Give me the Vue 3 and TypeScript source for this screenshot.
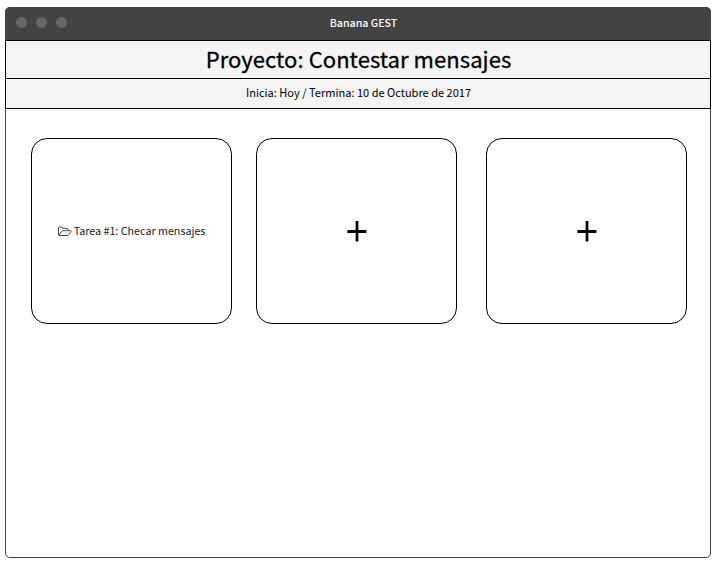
<script setup lang="ts">
interface Card {
  id: number
  label?: string
}

const cards: Card[] = [{ id: 1, label: 'Tarea #1: Checar mensajes' }, { id: 2 }, { id: 3 }]
</script>

<template>
  <main class="window">
    <header class="titlebar">
      <div class="controls">
        <span v-for="n in 3" :key="n" class="dot"></span>
      </div>
      <span class="app-name">Banana GEST</span>
    </header>
    <section class="project">
      <h1 class="title">Proyecto: Contestar mensajes</h1>
      <p class="dates">Inicia: Hoy / Termina: 10 de Octubre de 2017</p>
    </section>
    <section class="cards">
      <article v-for="card in cards" :key="card.id" class="card">
        <template v-if="card.label">
          <svg class="folder" width="14" height="11" viewBox="0 0 14 11">
            <path d="M2.6 9.5H1.5Q.5 9.5.5 8.5V2Q.5 1 1.5 1H3.7Q4.7 1 4.7 2V2.4H9.2Q10.2 2.4 10.2 3.4V4.7M1 9L3.5 5.6Q4.1 4.7 5 4.7H12.6Q13.6 4.7 13 5.5L10.7 8.7Q10.1 9.5 9.2 9.5H1.5" />
          </svg>
          <span class="label">{{ card.label }}</span>
        </template>
        <svg v-else class="plus" width="21" height="22" viewBox="0 0 21 22">
          <path d="M1.4 11.5H20.4" />
          <path class="stem" d="M11 1V21.5" />
        </svg>
      </article>
    </section>
  </main>
</template>

<style>
body {
  background: #fff;
}
</style>

<style scoped>
.window {
  box-sizing: border-box;
  width: 706px;
  height: 551px;
  margin: 7px 0 0 5px;
  border: 1px solid #434343;
  border-radius: 5px;
  background: #fff;
  color: #000;
  font-family: "Noto Sans CJK SC", "Noto Sans", sans-serif;
}
.titlebar {
  display: grid;
  grid-template-columns: 1fr auto 1fr;
  align-items: center;
  height: 33px;
  margin: -1px -1px 0;
  padding-left: 11px;
  border-radius: 5px 5px 0 0;
  box-sizing: border-box;
  background: #434343;
}
.controls {
  display: flex;
  gap: 9px;
  margin-top: -3px;
}
.dot {
  width: 11px;
  height: 11px;
  border-radius: 50%;
  background: #666;
}
.app-name {
  margin-top: -1px;
  color: #fff;
  font-size: 10.6px;
  font-weight: 500;
  line-height: 16px;
}
.project {
  margin: 0 -1px;
  border: 1px solid #000;
  background: #f4f4f4;
  text-align: center;
}
.title {
  margin: 0;
  height: 37px;
  border-bottom: 1px solid #000;
  padding-left: 1px;
  font-size: 22px;
  font-weight: 400;
  letter-spacing: 0.06px;
  line-height: 35px;
  -webkit-text-stroke: 0.3px #000;
}
.dates {
  margin: 0;
  height: 29px;
  padding-left: 1px;
  font-size: 11.04px;
  line-height: 26px;
}
.cards {
  display: grid;
  grid-template-columns: 201px 201px 201px;
  column-gap: 24px;
  padding: 29px 0 0 25px;
}
.card {
  box-sizing: border-box;
  display: flex;
  align-items: center;
  justify-content: center;
  height: 186px;
  border: 1px solid #000;
  border-radius: 16px;
}
.card:last-child {
  margin-left: 5px;
  margin-right: -5px;
}
.folder {
  margin-right: 2px;
  fill: none;
  stroke: #333;
  stroke-width: 0.9;
}
.label {
  color: #222;
  font-size: 10.72px;
  line-height: 16px;
  white-space: nowrap;
}
.plus {
  fill: none;
  stroke: #000;
  stroke-width: 3;
}
.stem {
  stroke-width: 2.7;
}
</style>
